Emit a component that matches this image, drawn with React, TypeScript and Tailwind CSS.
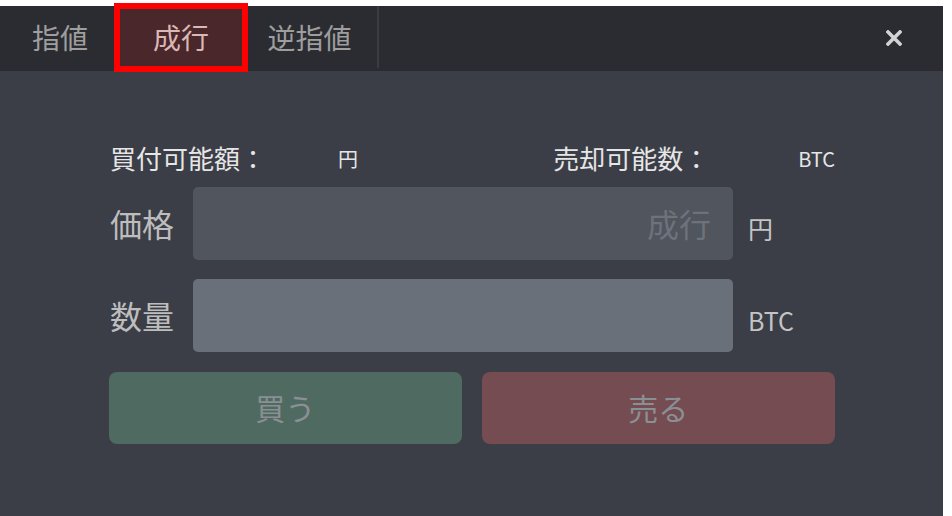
import React from "react";

export default function App() {
  return (
    <div className="w-[952px] h-[516px] bg-white pt-[6px] font-['Noto_Sans_CJK_JP','Noto_Sans',sans-serif] overflow-hidden">
      <div className="w-[943px] h-[510px] bg-[#3b3e47] flex flex-col">
        {/* header */}
        <div className="h-[65px] bg-[#2b2c31] flex items-stretch shrink-0">
          <div className="w-[114px] flex items-center justify-center text-[28px] leading-none text-[#9e9e9e] pl-[6px] pb-[4px]">
            指値
          </div>
          <div className="relative w-[134px] flex items-center justify-center text-[28px] leading-none text-[#dbb7b6] bg-[#4a272b] pb-[4px]">
            成行
            <div className="absolute left-0 right-0 top-[-3px] bottom-[-1px] border-[6px] border-[#ff0000]" />
          </div>
          <div className="w-[131px] flex items-center justify-center text-[28px] leading-none text-[#9e9e9e] border-r-2 border-[#3a3c42] mb-[3px] pr-[6px] pb-[1px]">
            逆指値
          </div>
          <div className="flex-1" />
          <div className="w-[16px] mr-[41px] flex items-center pb-[2px]">
            <svg width="16" height="16" viewBox="0 0 16 16">
              <path d="M2 2 L14 14 M14 2 L2 14" stroke="#d2d2d2" strokeWidth="3.6" strokeLinecap="square" />
            </svg>
          </div>
        </div>

        {/* body */}
        <div className="pl-[109px] w-[835px] flex flex-col">
          {/* info row */}
          <div className="mt-[72px] h-[30px] flex items-center">
            <div className="w-[445px] flex items-center">
              <span className="w-[229px] pl-[1px] text-[26px] leading-none text-[#e6e6e6]">買付可能額：</span>
              <span className="text-[20px] leading-none text-[#e6e6e6] mt-[2px]">円</span>
            </div>
            <div className="flex items-center">
              <span className="w-[245px] text-[26px] leading-none text-[#e6e6e6]">売却可能数：</span>
              <span className="text-[20px] leading-none text-[#e6e6e6] mt-[2px]">BTC</span>
            </div>
          </div>

          {/* price row */}
          <div className="mt-[14px] flex items-center">
            <span className="w-[84px] pl-[1px] pb-[2px] text-[32px] leading-none text-[#bdbdbd]">価格</span>
            <div className="w-[540px] h-[73px] rounded-[5px] bg-[#50555e] flex items-center justify-end pr-[22px]">
              <span className="text-[32px] leading-none text-[#6d727b] pb-[2px]">成行</span>
            </div>
            <span className="ml-[15px] mt-[10px] text-[25px] leading-none text-[#c4c4c4]">円</span>
          </div>

          {/* amount row */}
          <div className="mt-[19px] flex items-center">
            <span className="w-[84px] pl-[1px] pb-[2px] text-[32px] leading-none text-[#bdbdbd]">数量</span>
            <div className="w-[540px] h-[73px] rounded-[5px] bg-[#6a7079]" />
            <span className="ml-[15px] mt-[10px] text-[25px] leading-none text-[#c4c4c4]">BTC</span>
          </div>

          {/* buttons */}
          <div className="mt-[20px] flex gap-[20px]">
            <div className="w-[353px] h-[72px] rounded-[8px] bg-[#4f6a60] flex items-center justify-center text-[30px] leading-none text-[#8a8f93] pb-[2px]">
              買う
            </div>
            <div className="w-[354px] h-[72px] rounded-[8px] bg-[#744c51] flex items-center justify-center text-[30px] leading-none text-[#8a8f93] pb-[2px]">
              売る
            </div>
          </div>
        </div>
      </div>
    </div>
  );
}
